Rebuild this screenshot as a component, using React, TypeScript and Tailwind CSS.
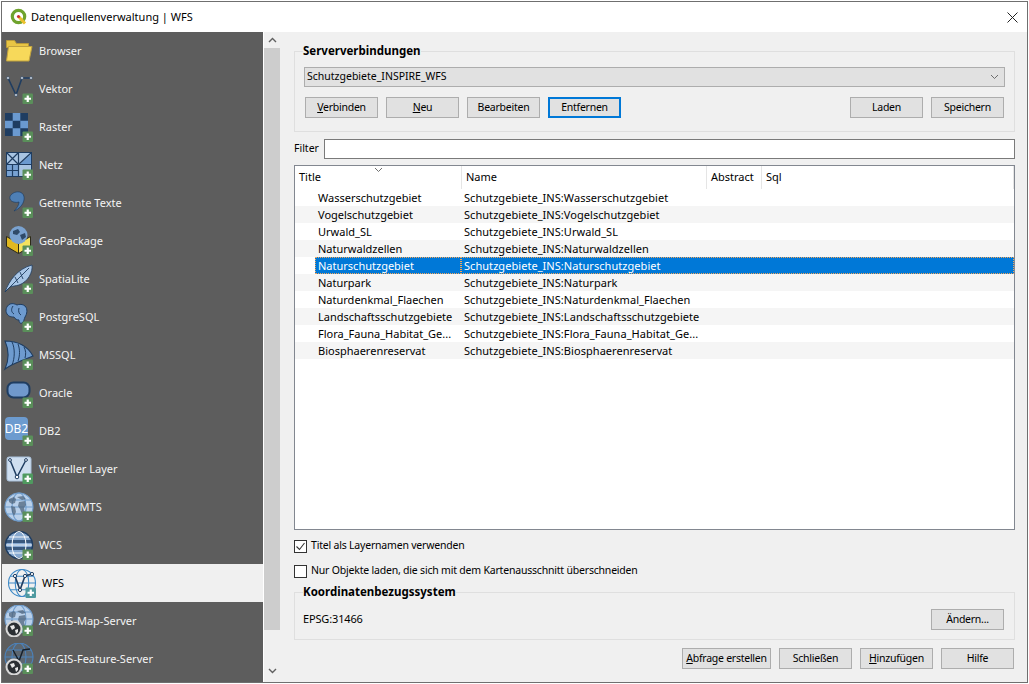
import type { ReactNode } from 'react';

const font = { fontFamily: '"Noto Sans", sans-serif' };

function Badge({ color = '#5a8f5a' }: { color?: string }) {
  return (
    <g>
      <rect x="19.5" y="20.5" width="10.5" height="10.5" rx="1" fill={color} />
      <path d="M24.75 22.5v6.5M21.5 25.75h6.5" stroke="#fff" strokeWidth="2.2" />
    </g>
  );
}

function Globe({ cx = 16, cy = 16, r = 13.5, fill = '#b9d0ea', line = '#6f9ccc' }: { cx?: number; cy?: number; r?: number; fill?: string; line?: string }) {
  return (
    <g fill="none" stroke={line} strokeWidth="1.1">
      <circle cx={cx} cy={cy} r={r} fill={fill} />
      <ellipse cx={cx} cy={cy} rx={r * 0.5} ry={r} />
      <path d={`M${cx - r} ${cy}h${r * 2}M${cx - r * 0.87} ${cy - r * 0.5}h${r * 1.74}M${cx - r * 0.87} ${cy + r * 0.5}h${r * 1.74}`} />
    </g>
  );
}

function Continents() {
  return (
    <g fill="#4a5f76" opacity="0.7">
      <path d="M6 8l5-2 2 2-1 4-3 1-3-2zM14 6l6-1 3 3-4 1zM8 15l4 1 1 5-2 4-2-4zM16 11l6-1 1 4-2 3 1 4-3 2-2-5-2-3z" />
    </g>
  );
}

function SmallGlobe() {
  return (
    <g>
      <circle cx="11" cy="24" r="8.5" fill="#d8d8d8" />
      <circle cx="11" cy="24" r="6.5" fill="#2b2f33" />
      <path d="M7 21l4-1 1 3-3 2zM12 25l3-1 0 3-2 2z" fill="#e8e8e8" />
    </g>
  );
}

const navy = '#1f3d61';

const icons: Record<string, ReactNode> = {
  Browser: (
    <>
      <path d="M3.5 5.5h8l2 3h12v4h-22z" fill="#e8c544" stroke="#b89a3a" />
      <path d="M5.5 11.5h23.5l-3 14.5h-22.5z" fill="#f7d95a" stroke="#c0a23f" />
    </>
  ),
  Vektor: (
    <>
      <path d="M5 5l8 17 6-17h9" fill="none" stroke={navy} strokeWidth="1.6" />
      <g fill="#fff" stroke={navy} strokeWidth="0.6">
        <circle cx="5" cy="5" r="1.3" />
        <circle cx="13" cy="22" r="1.3" />
        <circle cx="19" cy="5" r="1.3" />
        <circle cx="28" cy="5" r="1.3" />
      </g>
      <Badge />
    </>
  ),
  Raster: (
    <>
      <rect x="2" y="2" width="23" height="23" fill="#6b9ad0" />
      <path d="M2 2h7.7v7.7h-7.7zM17.3 2h7.7v7.7h-7.7zM9.7 9.7h7.6v7.6h-7.6zM2 17.3h7.7v7.7h-7.7zM17.3 17.3h7.7v7.7h-7.7z" fill={navy} />
      <Badge />
    </>
  ),
  Netz: (
    <>
      <rect x="3.5" y="3.5" width="25" height="24" fill="#a8c4e2" stroke={navy} />
      <path d="M17 15l11-10v10z" fill="#6b9ad0" />
      <path d="M4 16h11v5h-11zM4 22h11v5h-11z" fill="#6b9ad0" opacity="0.8" />
      <path d="M3.5 3.5l12 12M15.5 3.5l-12 12M3.5 15.5h25M15.5 3.5v24M28.5 3.5l-13 12M3.5 21.5h12M9.5 15.5v12" fill="none" stroke={navy} strokeWidth="1.2" />
      <Badge />
    </>
  ),
  'Getrennte Texte': (
    <>
      <path d="M13 5c5-1 9 2 8 8-1 5-5 9-10 11 3-3 5-6 5-9-3 1-8 0-9-3s2-6 6-7z" fill="#4e7fb5" stroke={navy} strokeWidth="0.7" />
      <Badge />
    </>
  ),
  GeoPackage: (
    <>
      <path d="M3.5 11.5l12 7v10l-12-7z" fill="#e0b820" stroke="#2c2a18" />
      <path d="M15.5 18.5l12-7v10l-12 7z" fill="#f5e25e" stroke="#2c2a18" />
      <circle cx="15.5" cy="10" r="9" fill="#7aa2cf" />
      <path d="M10 6l5-2 2 3-3 3-4-1zM17 10l5-2 1 4-4 3z" fill="#2f4a68" />
      <Badge />
    </>
  ),
  SpatiaLite: (
    <>
      <path d="M2 29C6 18 14 6 29 2c1 7-4 17-13 20-3 1-7 1-9 2z" fill="#a9c6e6" stroke={navy} strokeWidth="0.8" />
      <path d="M2 29L26 5M12 14l3 6M17 9l3 7" fill="none" stroke={navy} strokeWidth="0.9" />
      <Badge />
    </>
  ),
  PostgreSQL: (
    <>
      <path d="M7 3c3-1 5 0 7 1 2-1 6-1 8 1 3 3 2 8 0 11-1 2-1 5-3 6-2 1-3-1-3-3-2 0-4-1-5-3-2 0-5 0-7-3C2 10 3 5 7 3z" fill="#6e9bcf" stroke={navy} />
      <path d="M10 5c-2 3-2 6 1 8M16 7c-1 3 0 6 2 7" fill="none" stroke={navy} />
      <Badge />
    </>
  ),
  MSSQL: (
    <>
      <path d="M2 2c11 0 22 4 28 15C23 20 10 24 2 30c4-9 4-19 0-28z" fill="#6e9bcf" stroke={navy} strokeWidth="1.1" />
      <path d="M9 3c3 6 3 16 0 23M15 5c2 5 2 12 0 17M21 8c2 4 2 7 1 11" fill="none" stroke={navy} />
      <Badge />
    </>
  ),
  Oracle: (
    <>
      <rect x="4.5" y="5.5" width="22" height="15" rx="6" fill="#7099cc" stroke={navy} strokeWidth="2" />
      <Badge />
    </>
  ),
  DB2: (
    <>
      <rect x="2" y="2" width="23" height="23" rx="4" fill="#6c9bcf" />
      <text x="13.5" y="18" textAnchor="middle" fontSize="12" fill="#fff" style={{ fontFamily: '"Noto Sans", sans-serif' }}>
        DB2
      </text>
      <Badge />
    </>
  ),
  'Virtueller Layer': (
    <>
      <rect x="4" y="4" width="24" height="24" rx="2" fill="#cfdff0" stroke="#a8c0da" />
      <path d="M7 7l7 17 9-17" fill="none" stroke={navy} strokeWidth="1.5" />
      <g fill="#fff" stroke={navy}>
        <circle cx="14" cy="24" r="1.8" />
        <circle cx="7" cy="7" r="1.4" />
        <circle cx="23" cy="7" r="1.4" />
      </g>
      <Badge color="#4f9a5f" />
    </>
  ),
  'WMS/WMTS': (
    <>
      <Globe cy={16} r={14} />
      <Continents />
      <Badge />
    </>
  ),
  WCS: (
    <>
      <circle cx="16" cy="16" r="13.5" fill="#86a8d0" stroke={navy} strokeWidth="1.5" />
      <path d="M3 11h26v3h-26zM3 18h26v3h-26z" fill={navy} opacity="0.75" />
      <ellipse cx="16" cy="16" rx="7" ry="13.5" fill="none" stroke="#fff" />
      <path d="M3 16h26M6 8h20M6 24h20" stroke="#fff" strokeWidth="0.9" />
      <Badge />
    </>
  ),
  WFS: (
    <>
      <Globe r={13.5} fill="#f0f0f0" line="#3f8ac7" />
      <path d="M9 9l5 14 5-14 7-2" fill="none" stroke={navy} strokeWidth="1.6" />
      <g fill="#fff" stroke={navy}>
        <circle cx="14" cy="23" r="1.6" />
        <circle cx="9" cy="9" r="1.6" />
        <circle cx="19" cy="9" r="1.6" />
        <circle cx="26" cy="7" r="1.6" />
      </g>
      <Badge color="#4f9aa0" />
    </>
  ),
  'ArcGIS-Map-Server': (
    <>
      <Globe cy={14} r={14} />
      <Continents />
      <SmallGlobe />
      <Badge />
    </>
  ),
  'ArcGIS-Feature-Server': (
    <>
      <Globe cy={14} r={14} fill="#5c6670" line="#4b83bd" />
      <path d="M10 7l6 11 4-11 7-1" fill="none" stroke="#16202b" strokeWidth="1.4" />
      <SmallGlobe />
      <Badge />
    </>
  ),
};

const sources = Object.keys(icons);

const rows = [
  ['Wasserschutzgebiet', 'Schutzgebiete_INS:Wasserschutzgebiet'],
  ['Vogelschutzgebiet', 'Schutzgebiete_INS:Vogelschutzgebiet'],
  ['Urwald_SL', 'Schutzgebiete_INS:Urwald_SL'],
  ['Naturwaldzellen', 'Schutzgebiete_INS:Naturwaldzellen'],
  ['Naturschutzgebiet', 'Schutzgebiete_INS:Naturschutzgebiet'],
  ['Naturpark', 'Schutzgebiete_INS:Naturpark'],
  ['Naturdenkmal_Flaechen', 'Schutzgebiete_INS:Naturdenkmal_Flaechen'],
  ['Landschaftsschutzgebiete', 'Schutzgebiete_INS:Landschaftsschutzgebiete'],
  ['Flora_Fauna_Habitat_Ge...', 'Schutzgebiete_INS:Flora_Fauna_Habitat_Ge...'],
  ['Biosphaerenreservat', 'Schutzgebiete_INS:Biosphaerenreservat'],
];

function Btn({ children, wide, focused }: { children: ReactNode; wide?: boolean; focused?: boolean }) {
  return (
    <button
      className={`h-[21px] ${wide ? 'w-[89px]' : 'w-[73px]'} flex items-center justify-center whitespace-nowrap bg-[#e1e1e1] text-[10.5px] tracking-[-0.25px] leading-none text-black ${
        focused ? 'border-2 border-[#0078d7]' : 'border border-[#adadad]'
      }`}
    >
      {children}
    </button>
  );
}

function Chevron({ up, thin, className }: { up?: boolean; thin?: boolean; className?: string }) {
  return (
    <svg width="9" height="6" viewBox="0 0 9 6" className={className}>
      <path d={up ? 'M1 5l3.5-3.5L8 5' : 'M1 1l3.5 3.5L8 1'} fill="none" stroke="#606060" strokeWidth={thin ? 0.9 : 1.4} />
    </svg>
  );
}

function HeaderCell({ label, width }: { label: string; width: string }) {
  return (
    <div className={`${width} h-[23px] pl-[4px] flex items-center border-r border-[#e5e5e5]`}>{label}</div>
  );
}

export default function App() {
  return (
    <div className="w-[1029px] h-[684px] bg-white p-[1px] overflow-hidden text-[11px] text-black" style={font}>
      <div className="w-[1027px] h-[682px] border border-[#6f6f6f] flex flex-col bg-[#f0f0f0]">
        <div className="h-[30px] shrink-0 bg-white flex items-center pl-[8px] pr-[9px]">
          <svg width="18" height="18" viewBox="0 0 18 18">
            <circle cx="8.5" cy="8.5" r="6.2" fill="none" stroke="#6fa32d" strokeWidth="3.2" />
            <path d="M9 9l6 6.5" stroke="#ecc02e" strokeWidth="3" />
            <circle cx="8.5" cy="8.5" r="1.6" fill="#c9302c" />
          </svg>
          <span className="ml-[3px] flex-1">Datenquellenverwaltung | WFS</span>
          <svg width="11" height="11" viewBox="0 0 11 11">
            <path d="M0.5 0.5l10 10M10.5 0.5l-10 10" stroke="#222" strokeWidth="1" />
          </svg>
        </div>

        <div className="flex flex-1 min-h-0">
          <div className="w-[261px] shrink-0 bg-[#5d5d5d]">
            {sources.map((name) => {
              const current = name === 'WFS';
              return (
                <div
                  key={name}
                  className={`h-[38px] flex items-center gap-[4px] ${current ? 'bg-[#f0f0f0] text-black pl-[4px]' : 'text-[#f4f4f4] pl-[1px]'}`}
                >
                  <svg width="32" height="32" viewBox="0 0 32 32" className="shrink-0">
                    {icons[name]}
                  </svg>
                  <span>{name}</span>
                </div>
              );
            })}
          </div>

          <div className="w-[17px] shrink-0 border-l border-white flex flex-col items-center">
            <div className="h-[16px] w-full shrink-0 flex items-center justify-center">
              <Chevron up />
            </div>
            <div className="h-[582px] w-full shrink-0 bg-[#cdcdcd]" />
            <div className="flex-1 w-full flex items-end justify-center pb-[8px]">
              <Chevron />
            </div>
          </div>

          <div className="flex-1 min-w-0 pl-[14px] pr-[12px] pt-[11px]">
            <fieldset className="border border-[#dfdfdf] pl-[9px] pr-[9px] pt-[8px] pb-[13px]">
              <legend className="font-bold text-[11.5px] ml-[-1px] h-[16px] leading-[16px]">Serververbindungen</legend>
              <div className="h-[20px] bg-[#e1e1e1] border border-[#adadad] flex items-center justify-between pl-[2px] pr-[5px] text-[10.5px]">
                <span>Schutzgebiete_INSPIRE_WFS</span>
                <Chevron thin />
              </div>
              <div className="mt-[10px] mx-[1px] flex gap-[8px]">
                <Btn>
                  <span>
                    <u>V</u>erbinden
                  </span>
                </Btn>
                <Btn>
                  <span>
                    <u>N</u>eu
                  </span>
                </Btn>
                <Btn>Bearbeiten</Btn>
                <Btn focused>Entfernen</Btn>
                <div className="flex-1" />
                <Btn>Laden</Btn>
                <Btn>Speichern</Btn>
              </div>
            </fieldset>

            <div className="mt-[7px] h-[20px] flex items-center gap-[6px]">
              <span className="w-[24px] text-[10.5px]">Filter</span>
              <div className="flex-1 h-[20px] bg-white border border-[#7a7a7a]" />
            </div>

            <div className="relative mt-[6px] h-[365px] bg-white border border-[#828790]">
              <Chevron thin className="absolute left-[79px] top-[1px]" />
              <div className="flex">
                <HeaderCell label="Title" width="w-[167px]" />
                <HeaderCell label="Name" width="w-[245px]" />
                <HeaderCell label="Abstract" width="w-[55px]" />
                <div className="flex-1 flex items-center pl-[4px] border-r border-[#e5e5e5]">Sql</div>
              </div>
              {rows.map(([title, name], i) => {
                const selected = i === 4;
                return (
                  <div key={title} className={`flex h-[17px] leading-[15px] ${i % 2 === 1 ? 'bg-[#f5f5f5]' : ''}`}>
                    <div className="w-[20px] shrink-0" />
                    <div
                      className={`w-[146px] shrink-0 pl-[2px] border border-dotted whitespace-nowrap ${
                        selected ? 'bg-[#0078d7] text-white border-[#f2a65a]' : 'border-transparent'
                      }`}
                    >
                      {title}
                    </div>
                    <div
                      className={`flex-1 pl-[2px] border border-dotted whitespace-nowrap tracking-[0.05px] ${
                        selected ? 'bg-[#0078d7] text-white border-[#f2a65a]' : 'border-transparent'
                      }`}
                    >
                      {name}
                    </div>
                  </div>
                );
              })}
            </div>

            <div className="mt-[6px] h-[20px] flex items-center gap-[4px]">
              <div className="w-[13px] h-[13px] bg-white border border-[#333] flex items-center justify-center">
                <svg width="11" height="11" viewBox="0 0 11 11">
                  <path d="M1.5 5.5l3 3 5-6.5" fill="none" stroke="#333" strokeWidth="1.1" />
                </svg>
              </div>
              <span className="text-[10.5px] tracking-[-0.2px]">Titel als Layernamen verwenden</span>
            </div>
            <div className="mt-[5px] h-[20px] flex items-center gap-[4px]">
              <div className="w-[13px] h-[13px] bg-white border border-[#333]" />
              <span className="text-[10.5px] tracking-[-0.2px]">Nur Objekte laden, die sich mit dem Kartenausschnitt überschneiden</span>
            </div>

            <fieldset className="mt-[3px] border border-[#dfdfdf] pl-[8px] pr-[10px] pt-[9px] pb-[9px]">
              <legend className="font-bold text-[11.5px] h-[16px] leading-[16px]">Koordinatenbezugssystem</legend>
              <div className="flex items-center justify-between">
                <span className="tracking-[-0.15px]">EPSG:31466</span>
                <Btn>Ändern...</Btn>
              </div>
            </fieldset>

            <div className="mt-[8px] flex justify-end gap-[8px] pr-[1px]">
              <Btn wide>
                <span>
                  <u>A</u>bfrage erstellen
                </span>
              </Btn>
              <Btn>Schließen</Btn>
              <Btn>
                <span>
                  <u>H</u>inzufügen
                </span>
              </Btn>
              <Btn>Hilfe</Btn>
            </div>
          </div>
        </div>
      </div>
    </div>
  );
}
